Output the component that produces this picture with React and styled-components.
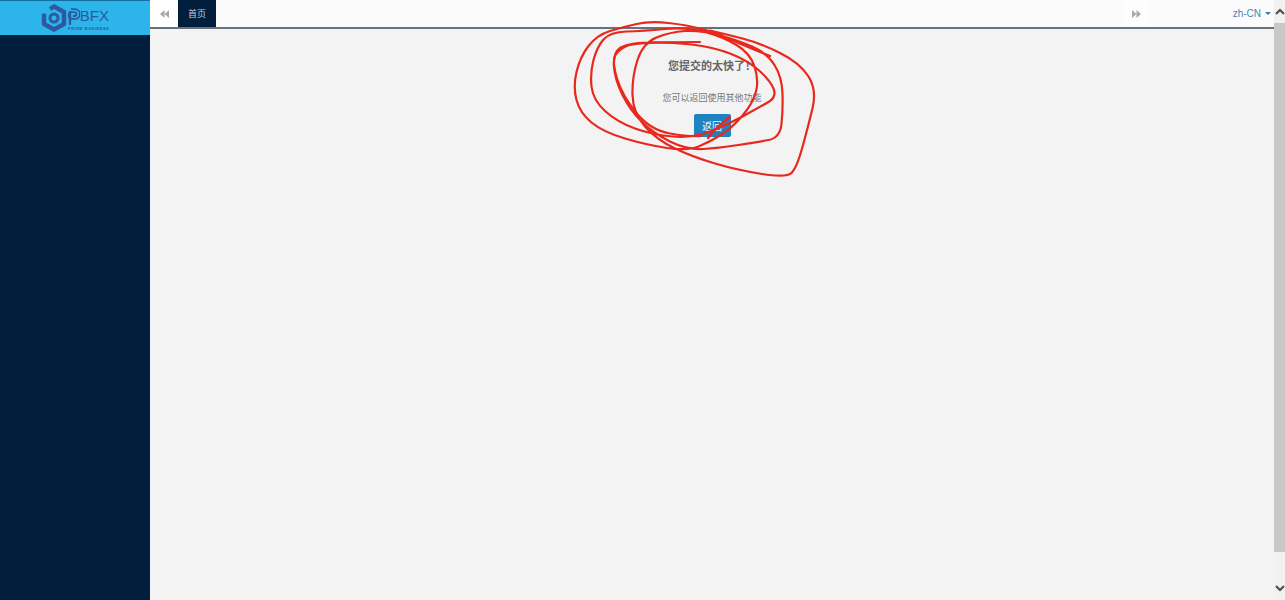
import React from "react";
import styled, { createGlobalStyle } from "styled-components";

const GlobalStyle = createGlobalStyle`
  html, body {
    margin: 0;
    height: 100%;
    overflow: hidden;
  }
  body {
    font-family: "Liberation Sans", "Noto Sans CJK SC", sans-serif;
    font-size: 10px;
    color: #666;
  }
`;

const Page = styled.div`
  position: relative;
  display: grid;
  grid-template-columns: 150px 1fr 11px;
  width: 1285px;
  height: 600px;
  overflow: hidden;
  background: #f3f3f3;
`;

const Sidebar = styled.aside`
  background: #011f3d;
`;

const LogoBar = styled.div`
  display: flex;
  align-items: center;
  justify-content: center;
  gap: 1px;
  height: 34px;
  border-top: 1px solid #14709c;
  background: #2db4ea;
`;

const LogoWords = styled.div`
  display: flex;
  flex-direction: column;
  width: 41px;
  color: #2c5a9e;
  margin-top: 1px;
`;

const LogoTop = styled.div`
  display: flex;
  align-items: center;
  height: 20px;
`;

const LogoName = styled.div`
  font-size: 15px;
  line-height: 20px;
`;

const LogoTag = styled.div`
  font-size: 4px;
  font-weight: 700;
  line-height: 6px;
  letter-spacing: 0.5px;
  white-space: nowrap;
`;

const Main = styled.main`
  display: flex;
  flex-direction: column;
`;

const TopBar = styled.header`
  display: flex;
  align-items: stretch;
  height: 27px;
  background: #fbfbfb;
  border-bottom: 2px solid #66727d;
`;

const NavArrow = styled.div`
  display: flex;
  align-items: center;
  justify-content: center;
  width: 28px;
  background: ${({ $plain }) => ($plain ? "#fdfdfd" : "#fff")};
  color: #a9a9a9;
`;

const Tab = styled.div`
  display: flex;
  align-items: center;
  justify-content: center;
  width: 38px;
  background: #011f3d;
  color: #c9d1da;
  font-size: 9px;
`;

const TabSpace = styled.div`
  flex: 1;
  background: #fbfbfb;
`;

const Lang = styled.div`
  display: flex;
  align-items: center;
  justify-content: flex-end;
  gap: 4px;
  width: 124px;
  padding-right: 3px;
  box-sizing: border-box;
  color: #4c82b5;
  font-size: 10px;
`;

const Caret = styled.span`
  width: 0;
  height: 0;
  border-left: 3px solid transparent;
  border-right: 3px solid transparent;
  border-top: 3px solid #3a78b5;
`;

const Content = styled.section`
  display: flex;
  flex-direction: column;
  align-items: center;
  padding: 29px 0 0 0;
`;

const Title = styled.h1`
  margin: 0;
  font-size: 11px;
  line-height: 16px;
  font-weight: 700;
  color: #666;
`;

const Message = styled.p`
  margin: 18px 0 0;
  font-size: 9px;
  line-height: 13px;
  color: #777;
`;

const BackButton = styled.button`
  margin-top: 9px;
  width: 37px;
  height: 23px;
  padding: 0;
  border: none;
  border-radius: 2px;
  background: #1f82c3;
  color: #f2f7fb;
  font: inherit;
`;

const Scrollbar = styled.div`
  display: flex;
  flex-direction: column;
  background: #f1f1f1;
`;

const ScrollButton = styled.div`
  display: flex;
  align-items: center;
  justify-content: center;
  height: 23px;
  color: #505050;
`;

const ScrollTrack = styled.div`
  flex: 1;
  padding-bottom: 25px;
  display: flex;
`;

const ScrollThumb = styled.div`
  flex: 1;
  background: #c8c8c8;
`;

const Scribble = styled.svg`
  position: absolute;
  left: 0;
  top: 0;
  pointer-events: none;
`;

// hand drawn circles around the message, roughly traced
const scribblePoints = [
  [770, 56], [740, 44], [717, 33], [687, 25], [650, 21], [623, 27], [597, 35], [580, 57],
  [573, 87], [580, 113], [603, 132], [647, 145], [687, 151], [710, 142], [733, 127], [753, 103],
  [759, 80], [750, 53], [723, 37], [687, 27], [643, 31], [610, 32], [597, 47], [590, 73],
  [593, 100], [617, 122], [653, 135], [693, 138], [727, 125], [760, 107], [777, 97], [770, 80],
  [747, 60], [713, 47], [670, 42], [627, 43], [613, 53], [615, 80], [630, 110], [653, 133],
  [687, 150], [720, 148], [757, 142], [780, 138], [783, 110], [782, 77], [767, 53], [737, 40],
  [700, 30], [670, 32], [643, 43], [632, 77], [633, 113], [657, 140], [693, 157], [737, 170],
  [787, 178], [797, 167], [808, 127], [817, 90], [800, 63], [760, 43], [725, 34], [695, 27],
];

const innerPoints = [
  [700, 42], [635, 42], [618, 50], [612, 62], [622, 95], [650, 130], [690, 137], [712, 135],
];

const smoothPath = (pts) => {
  let d = `M${pts[0][0]} ${pts[0][1]}`;
  for (let i = 1; i < pts.length - 1; i++) {
    const mx = (pts[i][0] + pts[i + 1][0]) / 2;
    const my = (pts[i][1] + pts[i + 1][1]) / 2;
    d += ` Q${pts[i][0]} ${pts[i][1]} ${mx} ${my}`;
  }
  return d;
};

const Logo = () => (
  <svg width="26" height="30" viewBox="0 0 26 30" fill="none" stroke="#2c5a9e" strokeLinejoin="round">
    <path d="M9 6 L13 3.5 L23 9 V21 L13 26.5 L3 21 V10.5" strokeWidth="4.4" />
    <circle cx="13" cy="15" r="4" strokeWidth="3" />
  </svg>
);

const LogoP = () => (
  <svg width="12" height="20" viewBox="0 0 12 20" fill="none" stroke="#2c5a9e">
    <path d="M3 3 H7 A4.5 4.5 0 0 1 7 13 H4 A2 2 0 0 1 4 6 H6.5 A1.8 1.8 0 0 1 6.5 10 H5" strokeWidth="1.8" />
    <path d="M2 5 V19" strokeWidth="2.4" />
  </svg>
);

const DoubleArrow = ({ right }) => (
  <svg width="9" height="8" viewBox="0 0 9 8" fill="currentColor">
    {right ? <path d="M0 0 L4.5 4 L0 8 Z M4.5 0 L9 4 L4.5 8 Z" /> : <path d="M4.5 0 L0 4 L4.5 8 Z M9 0 L4.5 4 L9 8 Z" />}
  </svg>
);

const Chevron = ({ up }) => (
  <svg width="10" height="7" viewBox="0 0 10 7" fill="none" stroke="currentColor" strokeWidth="2.2">
    <path d={up ? "M1 6 L5 2 L9 6" : "M1 1 L5 5 L9 1"} />
  </svg>
);

export default function App() {
  return (
    <Page>
      <GlobalStyle />
      <Sidebar>
        <LogoBar>
          <Logo />
          <LogoWords>
            <LogoTop>
              <LogoP />
              <LogoName>BFX</LogoName>
            </LogoTop>
            <LogoTag>PRIME BUSINESS</LogoTag>
          </LogoWords>
        </LogoBar>
      </Sidebar>
      <Main>
        <TopBar>
          <NavArrow>
            <DoubleArrow />
          </NavArrow>
          <Tab>首页</Tab>
          <TabSpace />
          <NavArrow $plain>
            <DoubleArrow right />
          </NavArrow>
          <Lang>
            zh-CN
            <Caret />
          </Lang>
        </TopBar>
        <Content>
          <Title>您提交的太快了！</Title>
          <Message>您可以返回使用其他功能</Message>
          <BackButton>返回</BackButton>
        </Content>
      </Main>
      <Scrollbar>
        <ScrollButton>
          <Chevron up />
        </ScrollButton>
        <ScrollTrack>
          <ScrollThumb />
        </ScrollTrack>
        <ScrollButton>
          <Chevron />
        </ScrollButton>
      </Scrollbar>
      <Scribble width="1285" height="600" viewBox="0 0 1285 600" fill="none" stroke="#e8281c" strokeWidth="2.2" strokeLinecap="round">
        <path d={smoothPath(scribblePoints)} />
        <path d={smoothPath(innerPoints)} />
        <path d="M708 138 Q716 127 730 117" />
      </Scribble>
    </Page>
  );
}
